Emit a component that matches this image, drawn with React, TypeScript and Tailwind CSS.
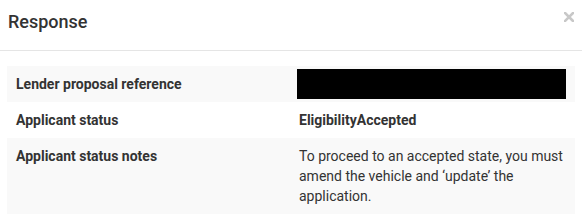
export default function App() {
  return (
    <div className="w-[582px] h-[222px] bg-white text-[#333] font-['Roboto',sans-serif]">
      <div className="h-[51px] border-b border-[#e5e5e5] flex items-start justify-between pl-[8px] pr-[8px] pt-[10px]">
        <h4 className="text-[18px] leading-[24px] font-medium text-[#333]">Response</h4>
        <button className="mt-[2px] w-[10px] h-[10px] flex items-center justify-center">
          <svg width="10" height="10" viewBox="0 0 10 10">
            <path d="M1 1 L9 9 M9 1 L1 9" stroke="#c8c8c8" strokeWidth="2.6" strokeLinecap="square" />
          </svg>
        </button>
      </div>
      <div className="px-[7px] pt-[15px] text-[14px] leading-[20px]">
        <div className="grid grid-cols-2 bg-[#f9f9f9]">
          <div className="px-[9px] py-[8px] font-bold">Lender proposal reference</div>
          <div className="pl-[6px] pr-[9px] py-[3px]">
            <div className="h-[30px] bg-black" />
          </div>
        </div>
        <div className="grid grid-cols-2 bg-white">
          <div className="px-[9px] py-[8px] font-bold">Applicant status</div>
          <div className="px-[8px] py-[8px] font-bold">EligibilityAccepted</div>
        </div>
        <div className="grid grid-cols-2 bg-[#f9f9f9]">
          <div className="px-[9px] py-[8px] font-bold">Applicant status notes</div>
          <div className="px-[8px] py-[8px]">
            To proceed to an accepted state, you must amend the vehicle and ‘update’ the application.
          </div>
        </div>
      </div>
    </div>
  );
}
